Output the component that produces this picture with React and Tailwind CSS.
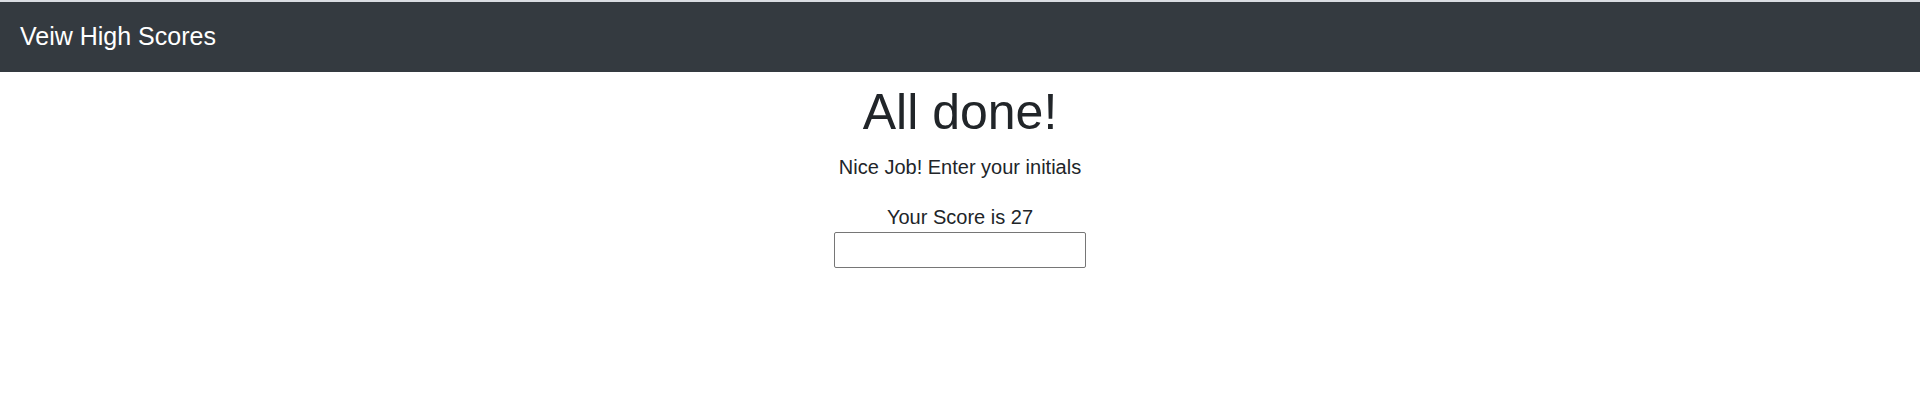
export default function App() {
  return (
    <div className="min-h-[411px] bg-white" style={{ fontFamily: '"Liberation Sans", Arial, sans-serif' }}>
      <div className="h-[2px] bg-[#dadde2]" />
      <nav className="flex h-[70px] items-center bg-[#343a40] px-[20px]">
        <span className="text-[25px] leading-[37.5px] text-white">Veiw High Scores</span>
      </nav>
      <main className="flex flex-col items-center text-center text-[#212529]">
        <h1 className="mt-[10px] mb-[10px] text-[50px] leading-[60px] font-normal">All done!</h1>
        <p className="mb-[20px] text-[20px] leading-[30px]">Nice Job! Enter your initials</p>
        <div className="text-[20px] leading-[30px]">Your Score is 27</div>
        <input
          type="text"
          className="h-[36px] w-[252px] rounded-[2px] border border-[#767676] bg-white px-[3px] text-[20px] outline-none"
        />
      </main>
    </div>
  );
}
